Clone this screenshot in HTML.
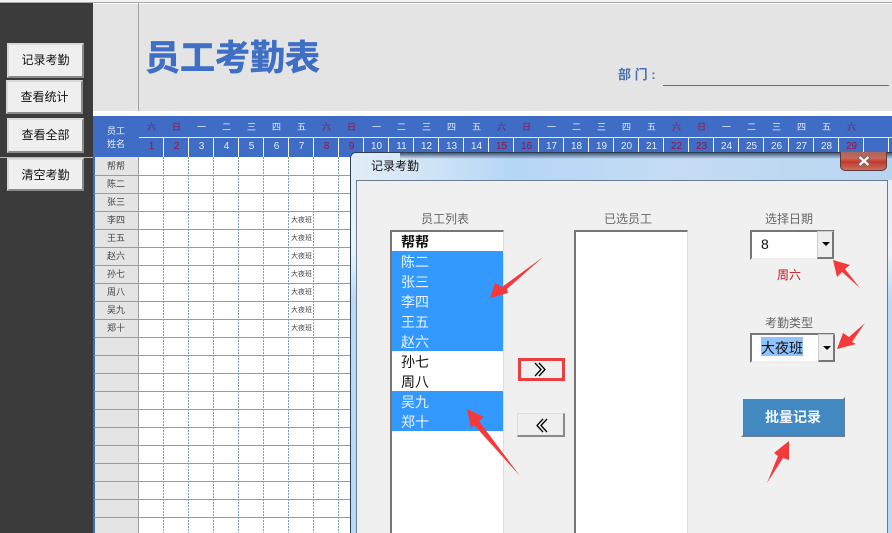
<!DOCTYPE html>
<html lang="zh"><head><meta charset="utf-8"><style>
html,body{margin:0;padding:0;background:#fff}
#p{position:relative;width:892px;height:533px;overflow:hidden;background:#fff;font-family:"Liberation Sans","Noto Sans CJK SC",sans-serif}
#p div,#p span{position:absolute;box-sizing:border-box}
.b{background:#efefef;border:2px solid;border-color:#d8d8d8 #8a8a8a #8a8a8a #d8d8d8;font-size:12px;color:#111;text-align:center;line-height:31px}
.w{top:118px;width:25px;height:19px;text-align:center;font-size:9px;line-height:18px;color:#e4ecfa}
.n{top:138px;width:25px;height:19px;text-align:center;font-size:10px;line-height:18px;color:#e4ecfa}
.r{color:#a0123c!important}
.nm{left:94px;width:44px;height:18px;text-align:center;font-size:9px;line-height:18px;color:#444}
.ds{left:289px;width:25px;height:18px;text-align:center;font-size:7px;line-height:19px;color:#444}
.it{left:401px;font-size:14px;line-height:20px;height:20px;color:#111;white-space:nowrap}
.s{color:#e8f3ff}
.lb{font-size:12px;color:#666;text-align:center;white-space:nowrap}
.box{background:#fff;border-style:solid;border-width:2px 1px 0 2px;border-color:#777 #ddd #777 #777}
.cb{background:#fff;border:2px solid;border-color:#777 #eee #eee #777;height:30px;width:85px}
.ar{background:#eee;border:1px solid #ccc;border-right:2px solid #777;border-bottom:2px solid #777;width:17px;height:28px}
</style></head><body><div id="p">
<div style="left:0;top:0;width:892px;height:2px;background:#f2f2f2"></div>
<div style="left:0;top:2px;width:892px;height:1px;background:#a8a8a8"></div>
<div style="left:0;top:3px;width:93px;height:530px;background:#3b3b3b"></div>
<div style="left:0;top:157px;width:93px;height:1px;background:#b5b5b5"></div>
<div style="left:93px;top:4px;width:799px;height:107px;background:#e4e4e4"></div>
<div style="left:138px;top:3px;width:1px;height:108px;background:#a0a0a0"></div>

<div class="b" style="left:7px;top:43px;width:77px;height:35px">记录考勤</div>
<div class="b" style="left:6px;top:80px;width:77px;height:34px">查看统计</div>
<div class="b" style="left:7px;top:118px;width:77px;height:35px">查看全部</div>
<div class="b" style="left:7px;top:158px;width:77px;height:33px">清空考勤</div>

<div style="left:145px;top:34px;font-size:35px;font-weight:700;line-height:50px;color:#3f6fc4;white-space:nowrap;-webkit-text-stroke:.6px #3f6fc4">员工考勤表</div>
<div style="left:618px;top:66px;font-size:13px;font-weight:700;line-height:18px;color:#4a72b0;white-space:nowrap">部 门 :</div>
<div style="left:663px;top:85px;width:226px;height:1px;background:#4a72b8"></div>

<div style="left:93px;top:116px;width:799px;height:41px;background:#3f6cc4"></div>
<div style="left:139px;top:137px;width:753px;height:1px;background:#e8eef8"></div>
<div style="left:163px;top:138px;width:726px;height:19px;background:repeating-linear-gradient(90deg,#f0f4fb 0,#f0f4fb 1px,transparent 1px,transparent 25px)"></div>
<div style="left:94px;top:125px;width:44px;text-align:center;font-size:9px;line-height:13px;color:#e8eef8">员工<br>姓名</div>

<span class="w r" style="left:139px">六</span><span class="w r" style="left:164px">日</span><span class="w" style="left:189px">一</span><span class="w" style="left:214px">二</span><span class="w" style="left:239px">三</span><span class="w" style="left:264px">四</span><span class="w" style="left:289px">五</span><span class="w r" style="left:314px">六</span><span class="w r" style="left:339px">日</span><span class="w" style="left:364px">一</span><span class="w" style="left:389px">二</span><span class="w" style="left:414px">三</span><span class="w" style="left:439px">四</span><span class="w" style="left:464px">五</span><span class="w r" style="left:489px">六</span><span class="w r" style="left:514px">日</span><span class="w" style="left:539px">一</span><span class="w" style="left:564px">二</span><span class="w" style="left:589px">三</span><span class="w" style="left:614px">四</span><span class="w" style="left:639px">五</span><span class="w r" style="left:664px">六</span><span class="w r" style="left:689px">日</span><span class="w" style="left:714px">一</span><span class="w" style="left:739px">二</span><span class="w" style="left:764px">三</span><span class="w" style="left:789px">四</span><span class="w" style="left:814px">五</span><span class="w r" style="left:839px">六</span>

<span class="n r" style="left:139px">1</span><span class="n r" style="left:164px">2</span><span class="n" style="left:189px">3</span><span class="n" style="left:214px">4</span><span class="n" style="left:239px">5</span><span class="n" style="left:264px">6</span><span class="n" style="left:289px">7</span><span class="n r" style="left:314px">8</span><span class="n r" style="left:339px">9</span><span class="n" style="left:364px">10</span><span class="n" style="left:389px">11</span><span class="n" style="left:414px">12</span><span class="n" style="left:439px">13</span><span class="n" style="left:464px">14</span><span class="n r" style="left:489px">15</span><span class="n r" style="left:514px">16</span><span class="n" style="left:539px">17</span><span class="n" style="left:564px">18</span><span class="n" style="left:589px">19</span><span class="n" style="left:614px">20</span><span class="n" style="left:639px">21</span><span class="n r" style="left:664px">22</span><span class="n r" style="left:689px">23</span><span class="n" style="left:714px">24</span><span class="n" style="left:739px">25</span><span class="n" style="left:764px">26</span><span class="n" style="left:789px">27</span><span class="n" style="left:814px">28</span><span class="n r" style="left:839px">29</span>

<div style="left:93px;top:157px;width:2px;height:376px;background:#3f6cc4"></div>
<div style="left:95px;top:157px;width:43px;height:376px;background:#e4e4e4"></div>
<div style="left:138px;top:157px;width:1px;height:376px;background:#a0a0a0"></div>
<div style="left:163px;top:157px;width:190px;height:376px;background:repeating-linear-gradient(90deg,#7f9cbf 0,#7f9cbf 1px,transparent 1px,transparent 25px);-webkit-mask:repeating-linear-gradient(180deg,#000 0,#000 2px,transparent 2px,transparent 3px);mask:repeating-linear-gradient(180deg,#000 0,#000 2px,transparent 2px,transparent 3px)"></div>
<div style="left:94px;top:175px;width:258px;height:358px;background:repeating-linear-gradient(180deg,#7f9fc4 0,#7f9fc4 1px,transparent 1px,transparent 18px)"></div>

<span class="nm" style="top:157px">帮帮</span><span class="nm" style="top:175px">陈二</span><span class="nm" style="top:193px">张三</span><span class="nm" style="top:211px">李四</span><span class="nm" style="top:229px">王五</span><span class="nm" style="top:247px">赵六</span><span class="nm" style="top:265px">孙七</span><span class="nm" style="top:283px">周八</span><span class="nm" style="top:301px">吴九</span><span class="nm" style="top:319px">郑十</span>
<span class="ds" style="top:211px">大夜班</span><span class="ds" style="top:229px">大夜班</span><span class="ds" style="top:247px">大夜班</span><span class="ds" style="top:265px">大夜班</span><span class="ds" style="top:283px">大夜班</span><span class="ds" style="top:301px">大夜班</span><span class="ds" style="top:319px">大夜班</span>

<!-- dialog -->
<div style="left:350px;top:152px;width:542px;height:381px;border-left:1px solid #2c3e50;border-top:1px solid #2c3e50;border-top-left-radius:6px;background:linear-gradient(180deg,#e4eef8 0,#e8f2fb 100px,#b9d8f5 150px,#b9d8f5 100%)"></div>
<div style="left:351px;top:153px;width:541px;height:27px;border-top-left-radius:5px;background:linear-gradient(90deg,#e2eef9 0,#cfe3f6 15%,#b5d6f6 30%,#c5dcf3 60%,#b8d5f0 100%)"></div>
<div style="left:400px;top:153px;width:492px;height:6px;background:linear-gradient(180deg,#41597a,rgba(120,150,190,0))"></div>
<div style="left:371px;top:157px;font-size:12px;line-height:18px;color:#111;white-space:nowrap">记录考勤</div>
<div style="left:840px;top:152px;width:47px;height:19px;border:1px solid #5a3a3a;border-top:0;border-radius:0 0 5px 5px;background:linear-gradient(180deg,#a9665c 0,#c9685a 35%,#c23a2c 55%,#c9705f 100%)"></div>
<svg style="position:absolute;left:857px;top:155px" width="14" height="12" fill="none"><path d="M2 1.500l10 9M12 1.500l-10 9" stroke="#6d5f5c" stroke-width="4"/><path d="M2.500 2l9 8M11.500 2l-9 8" stroke="#f6f6f6" stroke-width="2.400"/></svg>

<div style="left:356px;top:180px;width:532px;height:353px;background:#f0f0f0;border:1px solid #6d7d90;border-bottom:0"></div>

<div class="lb" style="left:385px;top:211px;width:120px;line-height:17px">员工列表</div>
<div class="lb" style="left:568px;top:211px;width:120px;line-height:17px">已选员工</div>
<div class="lb" style="left:729px;top:211px;width:120px;line-height:17px">选择日期</div>
<div class="lb" style="left:729px;top:315px;width:120px;line-height:17px">考勤类型</div>
<div style="left:729px;top:267px;width:120px;text-align:center;font-size:12px;line-height:17px;color:#c8101c">周六</div>

<div class="box" style="left:390px;top:230px;width:114px;height:303px"></div>
<div style="left:392px;top:251px;width:111px;height:100px;background:#3399ff"></div>
<div style="left:392px;top:391px;width:111px;height:40px;background:#3399ff"></div>
<span class="it" style="top:232px;font-weight:700">帮帮</span>
<span class="it s" style="top:252px">陈二</span><span class="it s" style="top:272px">张三</span><span class="it s" style="top:292px">李四</span><span class="it s" style="top:312px">王五</span><span class="it s" style="top:332px">赵六</span>
<span class="it" style="top:352px">孙七</span><span class="it" style="top:372px">周八</span>
<span class="it s" style="top:392px">吴九</span><span class="it s" style="top:412px">郑十</span>

<div class="box" style="left:574px;top:230px;width:114px;height:303px"></div>

<div class="cb" style="left:750px;top:230px"></div>
<div style="left:761px;top:235px;font-size:14px;line-height:18px;color:#111">8</div>
<div class="ar" style="left:817px;top:231px"></div>
<svg style="position:absolute;left:821px;top:241px" width="10" height="6"><path d="M1 1h8L5 5z" fill="#000"/></svg>

<div class="cb" style="left:750px;top:333px"></div>
<div style="left:761px;top:337px;width:42px;height:19px;background:#90c2fb"></div>
<div style="left:761px;top:338px;font-size:14px;line-height:20px;color:#111;white-space:nowrap">大夜班</div>
<div class="ar" style="left:818px;top:334px"></div>
<svg style="position:absolute;left:822px;top:345px" width="10" height="6"><path d="M1 1h8L5 5z" fill="#000"/></svg>

<div style="left:518px;top:358px;width:47px;height:23px;background:#f0f0f0;border:3px solid #e8403f"></div>
<svg style="position:absolute;left:534px;top:362px" width="14" height="15" fill="none" stroke="#000" stroke-width="1.300"><path d="M1 1l6 6.500-6 6.500M5 1l6 6.500-6 6.500"/></svg>
<div style="left:517px;top:413px;width:48px;height:24px;background:#efefef;border:1px solid #ddd;border-right:2px solid #8a8a8a;border-bottom:2px solid #8a8a8a"></div>
<svg style="position:absolute;left:534px;top:418px" width="14" height="15" fill="none" stroke="#000" stroke-width="1.300"><path d="M13 1l-6 6.500 6 6.500M9 1l-6 6.500 6 6.500"/></svg>

<div style="left:741px;top:397px;width:104px;height:40px;background:#4289c1;border:2px solid;border-color:#e8f2fa #6b7c8c #6b7c8c #e8f2fa;text-align:center;font-size:14px;font-weight:700;line-height:37px;color:#f2f8fd">批量记录</div>

<svg style="position:absolute;left:0;top:0" width="892" height="533"><g fill="#f5393a">
<path d="M490 298L495 283 502 287 543 257 507 289 508 293z"/>
<path d="M833 260L850 265 845 269 860 288 842 272 837 277z"/>
<path d="M837 349L843 333 849 337 865 323 852 342 856 344z"/>
<path d="M467 409L484 417 479 421 520 476 474 425 471 428z"/>
<path d="M789 441L789 460 783 458 767 483 778 456 774 453z"/>
</g></svg>
</div></body></html>
